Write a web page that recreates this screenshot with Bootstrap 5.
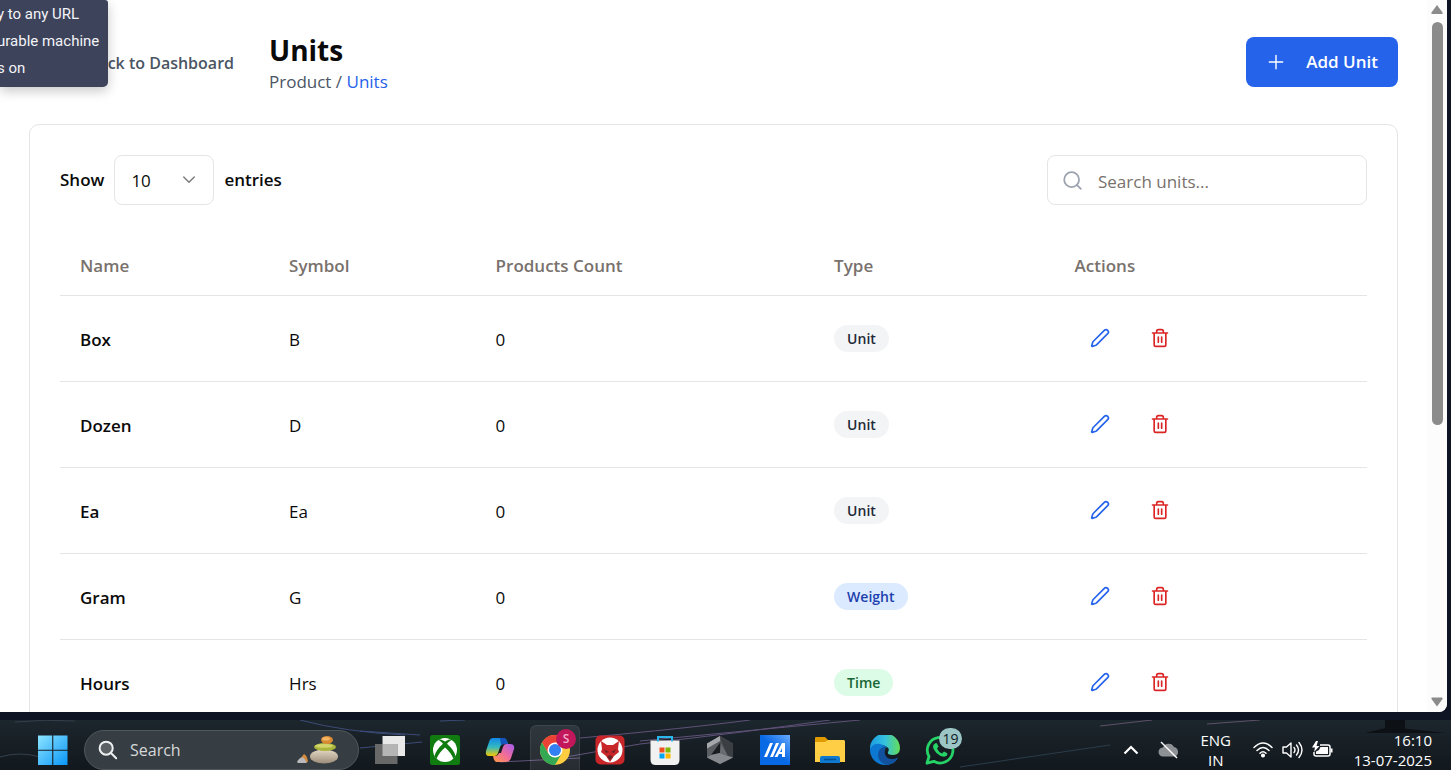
<!DOCTYPE html>
<html lang="en">
<head>
<meta charset="utf-8">
<meta name="viewport" content="width=device-width, initial-scale=1">
<title>Units</title>
<link href="https://cdn.jsdelivr.net/npm/bootstrap@5.3.0/dist/css/bootstrap.min.css" rel="stylesheet">
<style>
:root { --line:#e5e5e7; --blue:#2563eb; --ink:#0a0a0a; --muted:#78716c; }
body { font-family:"Open Sans","Noto Sans",sans-serif; font-size:17px; line-height:24px; color:var(--ink); background:#0e1424; }
.browser { background:#fff; margin-right:4px; margin-bottom:8px; border-radius:0 0 8px 0; min-height:0; }
.page-body { padding:30px 29px 0; min-width:0; }
.page-head { height:64px; margin-bottom:30px; }
.back-link { width:220px; padding-right:15px; padding-top:2px; font-size:16px; font-weight:600; color:#4b5563; }
.page-title { font-size:28px; line-height:38px; font-weight:700; padding-top:2px; }
.crumbs { font-size:17px; line-height:26px; color:#4b5563; }
.crumbs a { color:var(--blue); }
.btn-add { height:50px; padding:0 20px; border-radius:8px; background:var(--blue); color:#fff; font-size:17px; font-weight:600; gap:20px; border:0; }
.btn-add:hover { background:#1d4ed8; color:#fff; }
.unit-card { border:1px solid var(--line); border-radius:10px; padding:30px; }
.tools { margin-bottom:30px; font-weight:600; }
.size-group { gap:10px; }
.field { height:50px; border:1px solid var(--line); border-radius:8px; color:var(--ink); font-size:17px; background:#fff; }
.size-pick { width:100px; padding:2px 16px 0; appearance:none; }
.pick-arrow { right:16px; top:16px; pointer-events:none; color:#7d7d7d; }
.find { width:320px; }
.find .field { width:100%; padding:2px 16px 0 50px; }
.find .field::placeholder { color:var(--muted); opacity:1; }
.find svg { left:15px; top:15px; color:#9ca3af; }
.unit-table { table-layout:fixed; margin:0; --bs-table-bg:transparent; color:var(--ink); }
.unit-table > :not(caption) > * > * { padding:0 20px; border-bottom:1px solid var(--line); vertical-align:middle; color:inherit; }
.unit-table > thead > tr > th { height:60px; padding-top:2px; color:var(--muted); font-weight:600; }
.unit-table tbody tr { height:86px; }
.unit-table > tbody > tr > :nth-child(-n+3) { padding-top:3px; }
.unit-table tbody th { font-weight:600; }
.c-name { width:16%; } .c-symbol { width:15.8%; } .c-count { width:25.9%; } .c-type { width:18.4%; }
.pill { display:inline-block; padding:0 13px; border-radius:14px; font-size:14px; line-height:27px; font-weight:600; background:#f3f4f6; color:#1f2937; }
.pill.weight { background:#dbeafe; color:#1e40af; }
.pill.time { background:#dcfce7; color:#166534; }
.acts { gap:10px; }
.act { width:50px; height:50px; padding:0; border:0; background:none; display:flex; align-items:center; justify-content:center; color:var(--blue); }
.act.del { color:#dc2626; }
.scroller { width:20px; background:#fcfcfc; border-radius:0 0 8px 0; padding:5px 0; }
.thumb { width:11px; height:403px; border-radius:6px; background:#8b8b8b; margin-top:3px; }
.hint { left:0; top:0; width:108px; height:87px; background:#3d435a; color:#f3f4f8; font:400 15px/27px Roboto,sans-serif; border-radius:0 3px 5px 0; overflow:hidden; box-shadow:0 4px 12px rgba(0,0,0,.22); z-index:5; }
.hint ul { margin:1px 0 0 -3px; white-space:nowrap; }
.taskbar { height:50px; background:linear-gradient(#1c262d,#12181d); color:#fff; overflow:hidden; position:relative; }
.streaks { position:absolute; inset:0; width:100%; height:50px; }
.task-row { position:relative; height:60px; padding:0 19px 0 28px; }
.tile { width:50px; height:50px; border:0; padding:0; background:none; display:flex; align-items:center; justify-content:center; position:relative; }
.tile.on { background:rgba(255,255,255,.09); box-shadow:inset 0 0 0 1px rgba(255,255,255,.07); border-radius:6px; }
.apps { gap:5px; }
.os-search { width:275px; height:40px; border-radius:20px; background:#373e43; border:1px solid #51585c; margin-left:6px; margin-right:6px; padding:0 15px 0 13px; }
.os-search input { min-width:0; border:0; background:none; color:#d9dcde; font-size:16px; padding:0; outline:0; }
.os-search input::placeholder { color:#d5d8da; opacity:1; }
.note { position:absolute; border-radius:11px; text-align:center; }
.note.user { left:26px; top:4px; width:20px; height:20px; background:#c2185b; color:#f4a9c8; font-size:12px; line-height:20px; font-weight:600; }
.note.count { left:24px; top:3px; width:23px; height:21px; background:#9cc5c5; color:#101b1e; font-size:14px; line-height:21px; }
.tray { font-size:15px; line-height:20px; }
.tray .tile { width:30px; }
.lang { width:48px; }
</style>
</head>
<body class="vh-100 d-flex flex-column overflow-hidden">
<svg width="0" height="0" class="position-absolute" aria-hidden="true">
  <symbol id="pen" viewBox="0 0 24 24"><path d="M21.2 6.8a1 1 0 0 0-4-4L3.8 16.2a2 2 0 0 0-.5.8L2 21.4a.5.5 0 0 0 .6.6l4.4-1.3a2 2 0 0 0 .8-.5z" fill="none" stroke="currentColor" stroke-width="2" stroke-linejoin="round"/></symbol>
  <symbol id="bin" viewBox="0 0 24 24"><path d="M3 6h18M19 6v14a2 2 0 0 1-2 2H7a2 2 0 0 1-2-2V6M8 6V4a2 2 0 0 1 2-2h4a2 2 0 0 1 2 2v2M10 11v6M14 11v6" fill="none" stroke="currentColor" stroke-width="2" stroke-linecap="round" stroke-linejoin="round"/></symbol>
</svg>

<main class="browser flex-grow-1 d-flex position-relative overflow-hidden">
  <div class="page-body flex-grow-1">
    <header class="page-head d-flex align-items-center">
      <a href="#" class="back-link text-end text-decoration-none text-nowrap flex-shrink-0">Back to Dashboard</a>
      <div class="flex-grow-1 ps-3 ms-1">
        <h1 class="page-title m-0">Units</h1>
        <nav class="crumbs" aria-label="Breadcrumb">Product / <a href="#" class="text-decoration-none">Units</a></nav>
      </div>
      <button type="button" class="btn btn-add d-flex align-items-center">
        <svg width="20" height="20" viewBox="0 0 24 24" fill="none" stroke="currentColor" stroke-width="1.7" stroke-linecap="round"><path d="M4 12h16M12 4v16"/></svg>Add Unit
      </button>
    </header>

    <section class="unit-card">
      <div class="tools d-flex justify-content-between align-items-center">
        <div class="size-group d-flex align-items-center">
          <label for="size">Show</label>
          <div class="position-relative">
            <select id="size" class="field size-pick"><option>10</option></select>
            <svg class="pick-arrow position-absolute" width="18" height="18" viewBox="0 0 24 24" fill="none" stroke="currentColor" stroke-width="2" stroke-linecap="round" stroke-linejoin="round"><path d="m5 8 7 7 7-7"/></svg>
          </div>
          <span>entries</span>
        </div>
        <div class="find position-relative">
          <svg class="position-absolute" width="21" height="21" viewBox="0 0 24 24" fill="none" stroke="currentColor" stroke-width="2" stroke-linecap="round"><circle cx="11" cy="11" r="8.500"/><path d="m21.500 21.500-4.300-4.300"/></svg>
          <input type="search" class="field" placeholder="Search units..." aria-label="Search units">
        </div>
      </div>
      <table class="table unit-table">
        <thead><tr><th class="c-name">Name</th><th class="c-symbol">Symbol</th><th class="c-count">Products Count</th><th class="c-type">Type</th><th>Actions</th></tr></thead>
        <tbody>
          <tr><th scope="row">Box</th><td>B</td><td>0</td><td><span class="pill">Unit</span></td><td><div class="acts d-flex"><button class="act" aria-label="Edit"><svg width="20" height="20"><use href="#pen"/></svg></button><button class="act del" aria-label="Delete"><svg width="20" height="20"><use href="#bin"/></svg></button></div></td></tr>
          <tr><th scope="row">Dozen</th><td>D</td><td>0</td><td><span class="pill">Unit</span></td><td><div class="acts d-flex"><button class="act" aria-label="Edit"><svg width="20" height="20"><use href="#pen"/></svg></button><button class="act del" aria-label="Delete"><svg width="20" height="20"><use href="#bin"/></svg></button></div></td></tr>
          <tr><th scope="row">Ea</th><td>Ea</td><td>0</td><td><span class="pill">Unit</span></td><td><div class="acts d-flex"><button class="act" aria-label="Edit"><svg width="20" height="20"><use href="#pen"/></svg></button><button class="act del" aria-label="Delete"><svg width="20" height="20"><use href="#bin"/></svg></button></div></td></tr>
          <tr><th scope="row">Gram</th><td>G</td><td>0</td><td><span class="pill weight">Weight</span></td><td><div class="acts d-flex"><button class="act" aria-label="Edit"><svg width="20" height="20"><use href="#pen"/></svg></button><button class="act del" aria-label="Delete"><svg width="20" height="20"><use href="#bin"/></svg></button></div></td></tr>
          <tr><th scope="row">Hours</th><td>Hrs</td><td>0</td><td><span class="pill time">Time</span></td><td><div class="acts d-flex"><button class="act" aria-label="Edit"><svg width="20" height="20"><use href="#pen"/></svg></button><button class="act del" aria-label="Delete"><svg width="20" height="20"><use href="#bin"/></svg></button></div></td></tr>
        </tbody>
      </table>
    </section>
  </div>

  <div class="scroller d-flex flex-column align-items-center flex-shrink-0" aria-hidden="true">
    <svg width="12" height="10" viewBox="0 0 12 10" class="mb-1 flex-shrink-0"><path d="M6 0 11.500 7.500Q12 9 11 9H1Q0 9 .5 7.500Z" fill="#8b8b8b"/></svg>
    <div class="thumb flex-shrink-0"></div>
    <svg width="12" height="10" viewBox="0 0 12 10" class="mt-auto"><path d="M6 9.500 .5 2Q0 .5 1 .5H11Q12 .5 11.500 2Z" fill="#8b8b8b"/></svg>
  </div>

  <aside class="hint position-absolute"><ul class="list-unstyled"><li>y to any URL</li><li>urable machine</li><li>s on</li></ul></aside>
</main>

<footer class="taskbar flex-shrink-0">
  <svg class="streaks" viewBox="0 0 1451 50" preserveAspectRatio="none" fill="none" aria-hidden="true">
    <path d="M15 2q30-3 60-1M0 37q20-6 40 0" stroke="#34404b"/>
    <path d="M300 0Q345 12 405 15M360 11 420 15M360 28 422 22M440 1 465 0" stroke="#3c4b78"/>
    <path d="M580 18Q690 8 750 0M560 38 640 24Q740 13 830 0M640 21 860 0M500 42 580 38" stroke="#5f5178"/>
    <path d="M960 47 1110 25" stroke="#2b3d4b"/>
    <path d="M1100 6 1152 0M1207 4 1260 0" stroke="#5e5269"/>
    <path d="M1385 0h20v10h-20zM1365 13l25-6 55 6z" fill="#0d1115"/>
  </svg>
  <div class="task-row d-flex align-items-center">
    <button class="tile" aria-label="Start"><svg width="30" height="30" viewBox="0 0 30 30"><defs><linearGradient id="win" x2="1" y2="1"><stop stop-color="#8de4ff"/><stop offset="1" stop-color="#0996f8"/></linearGradient></defs><path d="M0 .5h14.200v14.200H0zM15.300.5H29.500v14.200H15.300zM0 15.800h14.200V30H0zM15.300 15.800H29.500V30H15.300z" fill="url(#win)"/></svg></button>
    <div class="os-search d-flex align-items-center flex-shrink-0">
      <svg width="20" height="20" viewBox="0 0 22 22" fill="none" stroke="#eef1f2" stroke-width="2.200" stroke-linecap="round" class="me-2 flex-shrink-0"><circle cx="9" cy="9" r="7.200" fill="#5b6165"/><path d="m14.500 14.500 5.500 5.500"/></svg>
      <input type="text" class="flex-grow-1 ms-1" placeholder="Search" aria-label="Search Windows">
      <svg width="44" height="30" viewBox="0 0 44 30" class="flex-shrink-0 me-1">
        <defs><linearGradient id="st" x2="0" y2="1"><stop stop-color="#e4d9c6"/><stop offset="1" stop-color="#9b8c79"/></linearGradient></defs>
        <ellipse cx="29" cy="21.500" rx="14" ry="7" fill="url(#st)"/><ellipse cx="30" cy="12" rx="11" ry="4" fill="#a9b63b"/><ellipse cx="29" cy="10.800" rx="9" ry="2" fill="#d2d56a"/><ellipse cx="32" cy="5" rx="6" ry="4" fill="#d88b35"/><ellipse cx="31" cy="3.800" rx="4" ry="1.800" fill="#f4b565"/><path d="M5 24 9 19q3 1 4 8H6z" fill="#d58b3d"/><path d="M2 27Q5 21 9 23L12 28H3z" fill="#b9b9bc"/>
      </svg>
    </div>
    <div class="apps d-flex align-items-center flex-shrink-0">
      <button class="tile" aria-label="Task view"><svg width="30" height="30" viewBox="0 0 30 30"><path d="M7.500 1H30v20H7.500z" fill="#e9e9e9"/><path d="M0 9h22.500v20H0z" fill="#686868"/><path d="M7.500 9h15v12h-15z" fill="#b5b5b5"/></svg></button>
      <button class="tile" aria-label="Xbox"><svg width="30" height="30" viewBox="0 0 30 30"><rect width="30" height="30" rx="2.500" fill="#107c10"/><circle cx="15" cy="15" r="12" fill="#fff"/><path d="M7 4.500Q10 3.500 15 6.500q5-3 8-2Q20.500 5 17 8.800 24 15 25.500 21l-2 3Q21 17.500 15 12.500 9 17.500 6.500 24L4.500 21Q6 15 13 8.800 9.500 5 7 4.500Z" fill="#107c10"/></svg></button>
      <button class="tile" aria-label="Copilot"><svg width="30" height="28" viewBox="0 0 30 28"><defs><linearGradient id="cpa" x2="0" y2="1"><stop stop-color="#1188e8"/><stop offset=".5" stop-color="#32b9c0"/><stop offset="1" stop-color="#f5c900"/></linearGradient><linearGradient id="cpb" x1="1" x2="0" y2="1"><stop stop-color="#a45cf0"/><stop offset=".5" stop-color="#f06c9b"/><stop offset="1" stop-color="#ff9b45"/></linearGradient></defs><path d="M8 2H18Q21 2 22 5L23 8H19Q16 8 15 11L13 17Q12 20 9 20H4Q0 20 1 15L4 6Q5 2 8 2Z" fill="url(#cpa)"/><path d="M15 2h4q2 0 3 3l1 3h-4l-3 1z" fill="#1554bd"/><path d="M21 8h4q5 0 4 5l-3 9q-1 4-5 4H12q-3 0-4-6h2q3 0 4-3h2l2-6q1-3 3-3Z" fill="url(#cpb)"/></svg></button>
      <button class="tile on" aria-label="Chrome"><svg width="30" height="30" viewBox="0 0 30 30"><circle cx="15" cy="15" r="15" fill="#ffcd40"/><path d="M15 15 8.500 18.800 2 7.500A15 15 0 0 1 28 7.500H15Z" fill="#ea4335"/><path d="M2 7.500 8.500 18.800 15 22.500 21.500 18.800 15 30A15 15 0 0 1 2 7.500Z" fill="#34a853"/><circle cx="15" cy="15" r="7.500" fill="#fff"/><circle cx="15" cy="15" r="6" fill="#347ff1"/></svg><span class="note user">S</span></button>
      <button class="tile" aria-label="Fox app"><svg width="30" height="30" viewBox="0 0 30 30"><rect x=".5" y=".5" width="29" height="29" rx="5" fill="#c9262a"/><circle cx="15" cy="15" r="12.500" fill="#fff"/><path d="m6 6 6 4h6l6-4-1 8 1 3-5 4-4 6-4-6-5-4 1-3z" fill="#c9262a"/><path d="m9 14 5 3-3 1zM21 14l-5 3 3 1zM12 22l3-2 3 2-3 3z" fill="#6f2026"/></svg></button>
      <button class="tile" aria-label="Store"><svg width="30" height="30" viewBox="0 0 30 30"><path d="M.5 5.500h29V25q0 5-5 5h-19q-5 0-5-5z" fill="#f1f1f1"/><path d="M8 6.500V2h14v4.500" fill="none" stroke="#28b7e8" stroke-width="2"/><path d="M9.500 12.500h5v5h-5z" fill="#f25022"/><path d="M15.500 12.500h5v5h-5z" fill="#7fba00"/><path d="M9.500 18.500h5v5h-5z" fill="#00a4ef"/><path d="M15.500 18.500h5v5h-5z" fill="#ffb900"/></svg></button>
      <button class="tile" aria-label="Editor"><svg width="28" height="30" viewBox="0 0 28 30"><path d="M14 1 27 8.500v14L14 29 1 22.500v-14z" fill="#5a5e62"/><path d="M14 1 1 8.500v5L14 6z" fill="#a5a8ab"/><path d="M14 1 27 8.500v14L22 21 15 6z" fill="#3b3f43"/><path d="M14.500 7 5 20l9-2 8 3z" fill="#1a1d20"/><path d="M1 22.500 5 20l9-2 8 3 5 1.500L14 29z" fill="#85888c"/><path d="M14.500 7 14 18l8 3z" fill="#6a6e72"/></svg></button>
      <button class="tile" aria-label="Armoury"><svg width="30" height="30" viewBox="0 0 30 30"><defs><linearGradient id="ar" y1="1" x2="1" y2="0"><stop offset=".5" stop-color="#0869e5"/><stop offset="1" stop-color="#69abff"/></linearGradient></defs><path d="M0 0h30v30H0z" fill="url(#ar)"/><path d="M10 8h3L7 22H4zM16 8h3l-6 14h-3zM22 8h3v14h-3v-3h-3l-1.500 3h-3zM22 13l-2 4h2z" fill="#fff" fill-rule="evenodd"/></svg></button>
      <button class="tile" aria-label="Files"><svg width="30" height="28" viewBox="0 0 30 28"><path d="M0 2q0-1 1-1h9l3 3v6H0z" fill="#e09a00"/><path d="M0 6h10l3-2h16l1 1v21H0z" fill="#ffce45"/><path d="M5 27v-5q0-2 2-2h16q2 0 2 2v5z" fill="#0e79cf"/><path d="M9 23.500h12" stroke="#064f91" stroke-width="1.500"/></svg></button>
      <button class="tile" aria-label="Edge"><svg width="30" height="30" viewBox="0 0 30 30"><defs><linearGradient id="ed" x2="1"><stop stop-color="#1b9de2"/><stop offset=".5" stop-color="#35c1df"/><stop offset="1" stop-color="#64dd57"/></linearGradient></defs><path d="M0 14A15 15 0 0 1 30 13q0 7-7 7-6 0-5-3 2-3-1-5Q11 7 0 14Z" fill="url(#ed)"/><path d="M0 14q3-6 10-5 5 1 7 4-6-2-7 4-1 8 7 9 6 0 11-3-4 7-13 7A15 15 0 0 1 0 14Z" fill="#0c78d1"/><path d="M16 12.500q-8 0-8 7 0 7 7 10 8 1 13-7-6 3-11 0-4-4-1-10Z" fill="#11519d"/></svg></button>
      <button class="tile" aria-label="WhatsApp"><svg width="30" height="30" viewBox="0 0 30 30"><path d="M2 28.200 4 21.500A12.800 12.800 0 1 1 8.800 26.300Z" fill="none" stroke="#25d366" stroke-width="2.800" stroke-linejoin="round"/><path d="M10 8.500q1-1 2 0l1.500 3.200L12 13.500q1.500 3.500 5 5l2-2 3.300 1.700q.5 3-3.300 3.500Q15 21.500 11.500 18 8 14 8 11.500q.5-2.300 2-3Z" fill="#25d366"/></svg><span class="note count">19</span></button>
    </div>
    <div class="tray d-flex align-items-center ms-auto text-nowrap">
      <button class="tile me-2" aria-label="Hidden icons"><svg width="16" height="10" viewBox="0 0 16 10" fill="none" stroke="#fff" stroke-width="2.200"><path d="m1.500 8.500 6.500-6.500 6.500 6.500"/></svg></button>
      <button class="tile me-2 text-white" aria-label="OneDrive offline"><svg width="22" height="18" viewBox="0 0 22 18"><path d="M5 15.500a4.500 4.500 0 0 1 0-9 6 6 0 0 1 11-.5 5 5 0 0 1 1 9.500z" fill="#8d9194"/><path d="m3 1 16 16" stroke="#fff" stroke-width="1.500"/></svg></button>
      <div class="lang text-center">ENG<br>IN</div>
      <button class="tile ms-2" aria-label="Wi-Fi"><svg width="20" height="18" viewBox="0 0 20 18" fill="none" stroke="#fff" stroke-width="1.500" stroke-linecap="round"><path d="M1 6.500q9-9 18 0M4 9.500q6-6 12 0M7 12.300q3-3 6 0"/><circle cx="10" cy="14.500" r="1.300" fill="#fff"/></svg></button>
      <button class="tile" aria-label="Volume"><svg width="21" height="18" viewBox="0 0 21 18" fill="none" stroke="#fff" stroke-width="1.400" stroke-linejoin="round" stroke-linecap="round"><path d="M1 6h3.500L9 2v14l-4.500-4H1zM12 6.500q2 2.500 0 5M14.500 4q4 5 0 10M17 1.500q6 7.500 0 15"/></svg></button>
      <button class="tile me-3" aria-label="Battery charging"><svg width="21" height="18" viewBox="0 0 21 18"><path d="M8 4h8q2 0 2 2v7q0 2-2 2H4q-2 0-2-2v-2" fill="none" stroke="#fff" stroke-width="1.500"/><path d="M8.500 6H16v7H4v-2.500l3-1.500zM18.500 7.500h2v4h-2zM4 0 0 6.500h3L2 11l5.500-6H4.500L6 0z" fill="#fff"/></svg></button>
      <div class="text-end">16:10<br>13-07-2025</div>
    </div>
  </div>
</footer>
<script src="https://cdn.jsdelivr.net/npm/bootstrap@5.3.0/dist/js/bootstrap.bundle.min.js"></script>
</body>
</html>
